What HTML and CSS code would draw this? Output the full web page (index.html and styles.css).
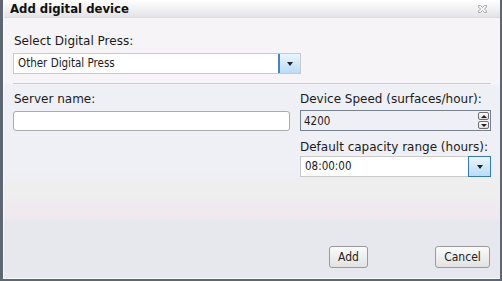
FILE: index.html
```html
<!DOCTYPE html>
<html>
<head>
<meta charset="utf-8">
<link rel="stylesheet" href="styles.css">
</head>
<body>
<div class="dialog">
  <div class="inner">
    <div class="titlebar">
      <span class="title">Add digital device</span>
      <svg class="close" width="9" height="8" viewBox="0 0 9 8"><path d="M0.5 0.5h2l2 2 2-2h2v1.5l-2 2 2 2v1.5h-2l-2-2-2 2h-2v-1.5l2-2-2-2z" fill="#f4f4f4" stroke="#a8a8a8" stroke-width="1"/></svg>
    </div>
    <div class="content">
      <div class="top">
        <label class="lbl">Select Digital Press:</label>
        <div class="select press">
          <span class="value">Other Digital Press</span>
          <span class="drop"><i class="arrow"></i></span>
        </div>
      </div>
      <div class="sep"></div>
      <div class="grid">
        <div class="col left">
          <label class="lbl">Server name:</label>
          <div class="textbox"></div>
        </div>
        <div class="col right">
          <label class="lbl">Device Speed (surfaces/hour):</label>
          <div class="numeric">
            <span class="value">4200</span>
            <span class="spin">
              <span class="sbtn"><i class="up"></i></span>
              <span class="sbtn"><i class="down"></i></span>
            </span>
          </div>
          <label class="lbl lbl2">Default capacity range (hours):</label>
          <div class="select time">
            <span class="value">08:00:00</span>
            <span class="drop boxed"><i class="arrow"></i></span>
          </div>
        </div>
      </div>
      <div class="buttons">
        <button class="btn add">Add</button>
        <button class="btn cancel">Cancel</button>
      </div>
    </div>
  </div>
</div>
</body>
</html>
```
FILE: styles.css
```css
* { box-sizing: border-box; }
html, body { margin: 0; padding: 0; }
body {
  width: 502px;
  height: 281px;
  overflow: hidden;
  font-family: "DejaVu Sans", Tahoma, sans-serif;
  font-size: 12px;
  color: #1a1a1a;
  background: #5c6670;
}
.dialog {
  width: 502px;
  height: 281px;
  border-left: 3px solid #5d6671;
  border-right: 2px solid #5d6671;
  border-bottom: 2px solid #5d6671;
}
.inner {
  height: 100%;
  border-left: 1px solid #fafafa;
  border-bottom: 1px solid #fafafa;
  display: flex;
  flex-direction: column;
  background: linear-gradient(to bottom,
    #f6f4f6 0px, #f6f4f6 84px,
    #eff0f6 85px, #eff0f6 170px,
    #eeeeee 185px, #eeeeee 198px,
    #efeaee 203px, #efeaee 218px,
    #e6e8ee 222px, #e6e8ee 262px,
    #e8e8f0 278px);
}
.titlebar {
  height: 18px;
  flex: none;
  display: flex;
  align-items: center;
  justify-content: space-between;
  padding: 0 13px 0 6px;
  background: linear-gradient(to bottom, #ffffff, #e4e4e8);
  border-bottom: 1px solid #dcdce0;
}
.title {
  font-family: "DejaVu Sans Condensed", "DejaVu Sans", sans-serif;
  font-weight: bold;
  font-size: 13px;
  color: #111;
  line-height: 16px;
}
.close { display: block; margin-top: 1px; }
.content {
  flex: 1;
  display: flex;
  flex-direction: column;
  padding: 16px 9px 10px 8px;
}
.lbl {
  display: block;
  line-height: 14px;
  height: 14px;
  white-space: nowrap;
}
.top { display: flex; flex-direction: column; gap: 5px; padding-left: 1px; }
.top .lbl { padding-left: 1px; }
.select {
  display: flex;
  align-items: stretch;
  height: 21px;
  background: #fff;
  border: 1px solid #c9c9c9;
}
.press { width: 288px; }
.value {
  font-family: "DejaVu Sans Condensed", "DejaVu Sans", sans-serif;
  font-size: 11.5px;
}
.select .value {
  flex: 1;
  padding-left: 4px;
  line-height: 19px;
}
.drop {
  width: 22px;
  display: flex;
  align-items: center;
  justify-content: center;
  background: linear-gradient(to bottom, #eaf5fd, #b9dcf6);
  border-left: 2px solid #3f86c2;
}
.arrow {
  width: 0; height: 0;
  border-left: 3.5px solid transparent;
  border-right: 3.5px solid transparent;
  border-top: 4px solid #222;
  margin-top: 1px;
}
.sep {
  height: 1px;
  background: #cfcbd2;
  margin: 9px 0 0 1px;
}
.grid {
  display: grid;
  grid-template-columns: 277px 191px;
  column-gap: 10px;
  padding-left: 1px;
  margin-top: 7px;
}
.col { display: flex; flex-direction: column; }
.left .lbl { padding-left: 1px; margin-top: 1px; }
.right .lbl { margin-top: 1px; }
.textbox {
  margin-top: 5px;
  height: 20px;
  background: #fff;
  border: 1px solid #aaaaaa;
  border-radius: 3px;
}
.numeric {
  margin-top: 4px;
  height: 21px;
  display: flex;
  align-items: center;
  background: #eef0f6;
  border: 1px solid #76838f;
}
.numeric .value { flex: 1; padding-left: 3px; }
.spin {
  display: flex;
  flex-direction: column;
  gap: 1px;
  margin-right: 1px;
}
.sbtn {
  width: 11px;
  height: 8px;
  border: 1px solid #6e6e6e;
  border-radius: 2px;
  background: linear-gradient(to bottom, #fbfbfb, #dedede);
  display: flex;
  align-items: center;
  justify-content: center;
}
.up {
  width: 0; height: 0;
  border-left: 3px solid transparent;
  border-right: 3px solid transparent;
  border-bottom: 3px solid #222;
}
.down {
  width: 0; height: 0;
  border-left: 3px solid transparent;
  border-right: 3px solid transparent;
  border-top: 3px solid #222;
}
.right .lbl2 { margin-top: 9px; }
.time { margin-top: 2px; }
.drop.boxed {
  border: 1px solid #3679b5;
  margin: -1px -1px -1px 0;
  width: 23px;
}
.buttons {
  margin-top: auto;
  display: flex;
  justify-content: flex-end;
  gap: 67px;
  padding-right: 1px;
}
.btn {
  font-family: "DejaVu Sans Condensed", "DejaVu Sans", sans-serif;
  font-size: 12px;
  height: 22px;
  padding: 0;
  color: #222;
  border: 1px solid #9a9a9a;
  border-radius: 3px;
  background: linear-gradient(to bottom, #fbfbfb, #e2e2e2);
}
.add { width: 39px; }
.cancel { width: 55px; }
```
